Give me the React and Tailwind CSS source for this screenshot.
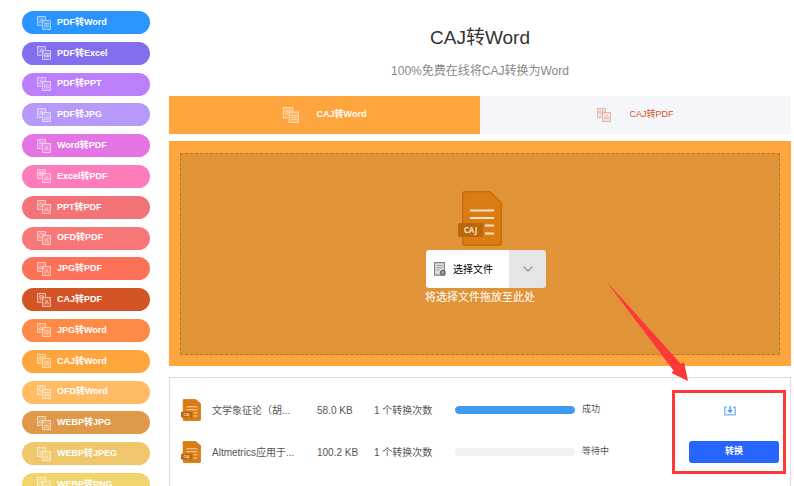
import React from 'react';
import clsx from 'clsx';
import { ChevronDown } from 'lucide-react';

const converters = [
  { from: 'PDF', to: 'Word', color: 'bg-[#2a94ff]' },
  { from: 'PDF', to: 'Excel', color: 'bg-[#836eed]' },
  { from: 'PDF', to: 'PPT', color: 'bg-[#bb7ffb]' },
  { from: 'PDF', to: 'JPG', color: 'bg-[#b699fb]' },
  { from: 'Word', to: 'PDF', color: 'bg-[#e473e3]' },
  { from: 'Excel', to: 'PDF', color: 'bg-[#ff7cba]' },
  { from: 'PPT', to: 'PDF', color: 'bg-[#f37277]' },
  { from: 'OFD', to: 'PDF', color: 'bg-[#f87878]' },
  { from: 'JPG', to: 'PDF', color: 'bg-[#fe7159]' },
  { from: 'CAJ', to: 'PDF', color: 'bg-[#d35427]' },
  { from: 'JPG', to: 'Word', color: 'bg-[#ff8a47]' },
  { from: 'CAJ', to: 'Word', color: 'bg-[#ffa53d]' },
  { from: 'OFD', to: 'Word', color: 'bg-[#ffbc64]' },
  { from: 'WEBP', to: 'JPG', color: 'bg-[#df994a]' },
  { from: 'WEBP', to: 'JPEG', color: 'bg-[#f1c76d]' },
  { from: 'WEBP', to: 'PNG', color: 'bg-[#f1d46b]' },
];

const files = [
  { name: '文学象征论（胡...', size: '58.0 KB', progress: 100, status: '成功', done: true },
  { name: 'Altmetrics应用于...', size: '100.2 KB', progress: 0, status: '等待中', done: false },
];

const picture = 'M0 5.4 L2 2.4 L3.5 4 L4.6 3 L6 5.4 Z M4.4 0.8 h0.9';

// Small marks drawn inside the two sheets of a converter icon
const marks = {
  PDF: 'M0.6 5.4 L3 0.6 L5.4 5.4 M1.6 4 h2.8',
  Word: 'M0 1 h6 M0 3 h6 M0 5 h6',
  Excel: 'M0 1 h6 v4 h-6 z M2 1 v4 M4 1 v4 M0 3 h6',
  PPT: 'M3 0.5 a2.4 2.4 0 1 0 2.4 2.5 M3 3 V1.6 M3 3 h3',
  OFD: 'M3 0.3 L5.3 1.6 V4.2 L3 5.6 L0.7 4.2 V1.6 Z',
  CAJ: 'M0.3 1.6 L3 0.6 L5.7 1.6 L3 2.8 Z M1 2.8 v1.6 L3 5.5 L5 4.4 V2.8',
  JPG: picture,
  JPEG: picture,
  PNG: picture,
  WEBP: picture,
};

const ConvertIcon = ({ from, to, className }) => (
  <svg viewBox="0 0 14 14" fill="none" stroke="currentColor" className={className} aria-hidden="true">
    <path d="M4.5 9.5 H0.5 V0.5 H8.5 V4" />
    <path d="M0.5 0.5 H8.5 V4.5 H5 V9.5 H0.5 Z" fill="currentColor" fillOpacity="0.25" stroke="none" />
    <path d="M5.5 4.5 H13.5 V13.5 H5.5 Z" fill="currentColor" fillOpacity="0.25" />
    <path d={marks[from]} transform="translate(2 2) scale(0.85)" />
    <path d={marks[to]} transform="translate(7.1 6.6) scale(0.85)" />
  </svg>
);

const CajFileIcon = ({ className }) => (
  <svg viewBox="0 0 44 55" preserveAspectRatio="none" className={className} aria-hidden="true">
    <path
      d="M7 0.7 H32 L43.3 12 V51 Q43.3 54.3 40 54.3 H8 Q4.7 54.3 4.7 51 V3 Q4.7 0.7 7 0.7 Z"
      fill="#da7c12"
      stroke="#c46d0c"
      strokeWidth="1.4"
    />
    <path d="M12 19.5 H36 M12 27 H36 M27 34.5 H36 M27 42.5 H36" stroke="#f9e3c8" strokeWidth="2" />
    <rect x="0" y="32" width="25" height="14" rx="1.5" fill="#b9660c" />
    <text
      x="12.5"
      y="42"
      textAnchor="middle"
      fontSize="8"
      fontWeight="bold"
      fontFamily="Noto Sans, sans-serif"
      fill="#f7dcc0"
    >
      CAJ
    </text>
  </svg>
);

const SelectFileIcon = () => (
  <svg viewBox="0 0 12 14" className="w-3 h-3.5 shrink-0" aria-hidden="true">
    <path d="M0.6 0.6 H10.4 V13.2 H0.6 Z" fill="#e0e0e0" stroke="#858585" strokeWidth="1.2" />
    <path d="M2.5 3.5 H8.5 M2.5 5.7 H8.5 M2.5 8 H5.5" stroke="#999" />
    <circle cx="8.8" cy="10.8" r="2.4" fill="#999" stroke="#6b6b6b" strokeWidth="1.2" />
  </svg>
);

const DownloadIcon = () => (
  <svg viewBox="0 0 12 10" fill="none" stroke="#8dbcf7" strokeWidth="1.6" className="w-3 h-2.5" aria-hidden="true">
    <path d="M3 1.2 H0.8 V8.8 H11.2 V1.2 H9" />
    <path d="M6 0 V6 M3.8 4 L6 6.2 L8.2 4" stroke="#5b9ff2" />
  </svg>
);

const Sidebar = () => (
  <nav className="w-32 shrink-0 pt-[11px]">
    <ul className="flex min-h-[485px] flex-col justify-between">
      {converters.map(({ from, to, color }) => (
        <li key={`${from}-${to}`}>
          <a
            href="#"
            className={clsx('flex h-[23px] items-center gap-1.5 rounded-full pl-[15px] text-[9px] font-bold text-white', color)}
          >
            <ConvertIcon from={from} to={to} className="w-3.5 h-3.5 opacity-60" />
            {from}转{to}
          </a>
        </li>
      ))}
    </ul>
  </nav>
);

const Tabs = () => (
  <div className="grid grid-cols-2 text-[9px]">
    <a href="#" className="flex h-[38px] items-center justify-center gap-[18px] bg-[#ffa53d] font-bold text-white">
      <ConvertIcon from="CAJ" to="Word" className="w-4 h-4 opacity-60" />
      CAJ转Word
    </a>
    <a href="#" className="flex h-[38px] items-center justify-center gap-[18px] bg-[#f5f6f9] text-[#d35427]">
      <ConvertIcon from="CAJ" to="PDF" className="w-3.5 h-3.5 opacity-40" />
      CAJ转PDF
    </a>
  </div>
);

const DropZone = () => (
  <section className="mt-[7px] bg-[#ffa53d] px-[11px] pt-3 pb-[11px]">
    <div className="flex min-h-[202px] flex-col items-center border border-dashed border-[#b9762d] bg-[#e19338] pt-[37px]">
      <CajFileIcon className="w-11 h-[55px]" />
      <div className="mt-1 pl-3">
        <div className="flex h-[38px] overflow-hidden rounded-[3px]">
          <button type="button" className="flex w-[83px] items-center gap-[7px] bg-white pl-2 text-[10px] text-black">
            <SelectFileIcon />
            选择文件
          </button>
          <button
            type="button"
            aria-label="更多来源"
            className="flex w-[37px] items-center justify-center bg-[#e5e5e5] text-[#999]"
          >
            <ChevronDown className="w-4 h-4" />
          </button>
        </div>
      </div>
      <p className="text-[11px] leading-[18px] text-white">将选择文件拖放至此处</p>
    </div>
  </section>
);

const FileTable = () => (
  <section className="relative mt-[11px] min-h-[120px] flex-1 border border-[#dcdcdc] p-[11px]">
    <table className="w-full table-fixed text-left text-[10px] text-[#555]">
      <colgroup>
        <col className="w-[31px]" />
        <col className="w-[105px]" />
        <col className="w-[57px]" />
        <col className="w-[81px]" />
        <col className="w-[127px]" />
        <col />
        <col className="w-[90px]" />
      </colgroup>
      <tbody>
        {files.map((file) => (
          <tr key={file.name} className="h-[42px]">
            <td>
              <CajFileIcon className="w-5 h-[22px]" />
            </td>
            <td className="whitespace-nowrap">{file.name}</td>
            <td>{file.size}</td>
            <td>1 个转换次数</td>
            <td>
              <div className="h-2 w-[120px] overflow-hidden rounded-full bg-[#f1f1f1]">
                <div className="h-full rounded-full bg-[#4299f2]" style={{ width: `${file.progress}%` }} />
              </div>
            </td>
            <td className="text-[9px]">{file.status}</td>
            <td>
              {file.done ? (
                <button type="button" aria-label="下载" className="flex w-full justify-center pt-0.5 pr-2">
                  <DownloadIcon />
                </button>
              ) : (
                <button type="button" className="h-[22px] w-full rounded-[3px] bg-[#2765fe] text-[9px] font-bold text-white">
                  转换
                </button>
              )}
            </td>
          </tr>
        ))}
      </tbody>
    </table>

    {/* Highlight around the action column */}
    <div className="pointer-events-none absolute top-3 right-1 h-[84px] w-[114px] border-3 border-[#fd3838]" />
    <svg
      viewBox="0 0 82 100"
      className="pointer-events-none absolute -top-[97px] right-[102px] h-[100px] w-[82px]"
      aria-hidden="true"
    >
      <path d="M0 0 L75 83 L78 81 L82 100 L65.5 92 L67.5 89.5 Z" fill="#fd3838" />
    </svg>
  </section>
);

const App = () => {
  return (
    <div
      lang="zh-CN"
      className="flex h-screen gap-[19px] overflow-hidden bg-white pr-[3px] pl-[22px] font-['Liberation_Sans','Noto_Sans_CJK_SC',sans-serif]"
    >
      <Sidebar />
      <main className="flex min-w-0 flex-1 flex-col">
        <header className="pt-[21px] pb-2 text-center">
          <h1 className="text-[19px] leading-[34px] text-[#333]">CAJ转Word</h1>
          <p className="text-xs leading-[33px] text-[#888]">100%免费在线将CAJ转换为Word</p>
        </header>
        <Tabs />
        <DropZone />
        <FileTable />
      </main>
    </div>
  );
};

export default App;
